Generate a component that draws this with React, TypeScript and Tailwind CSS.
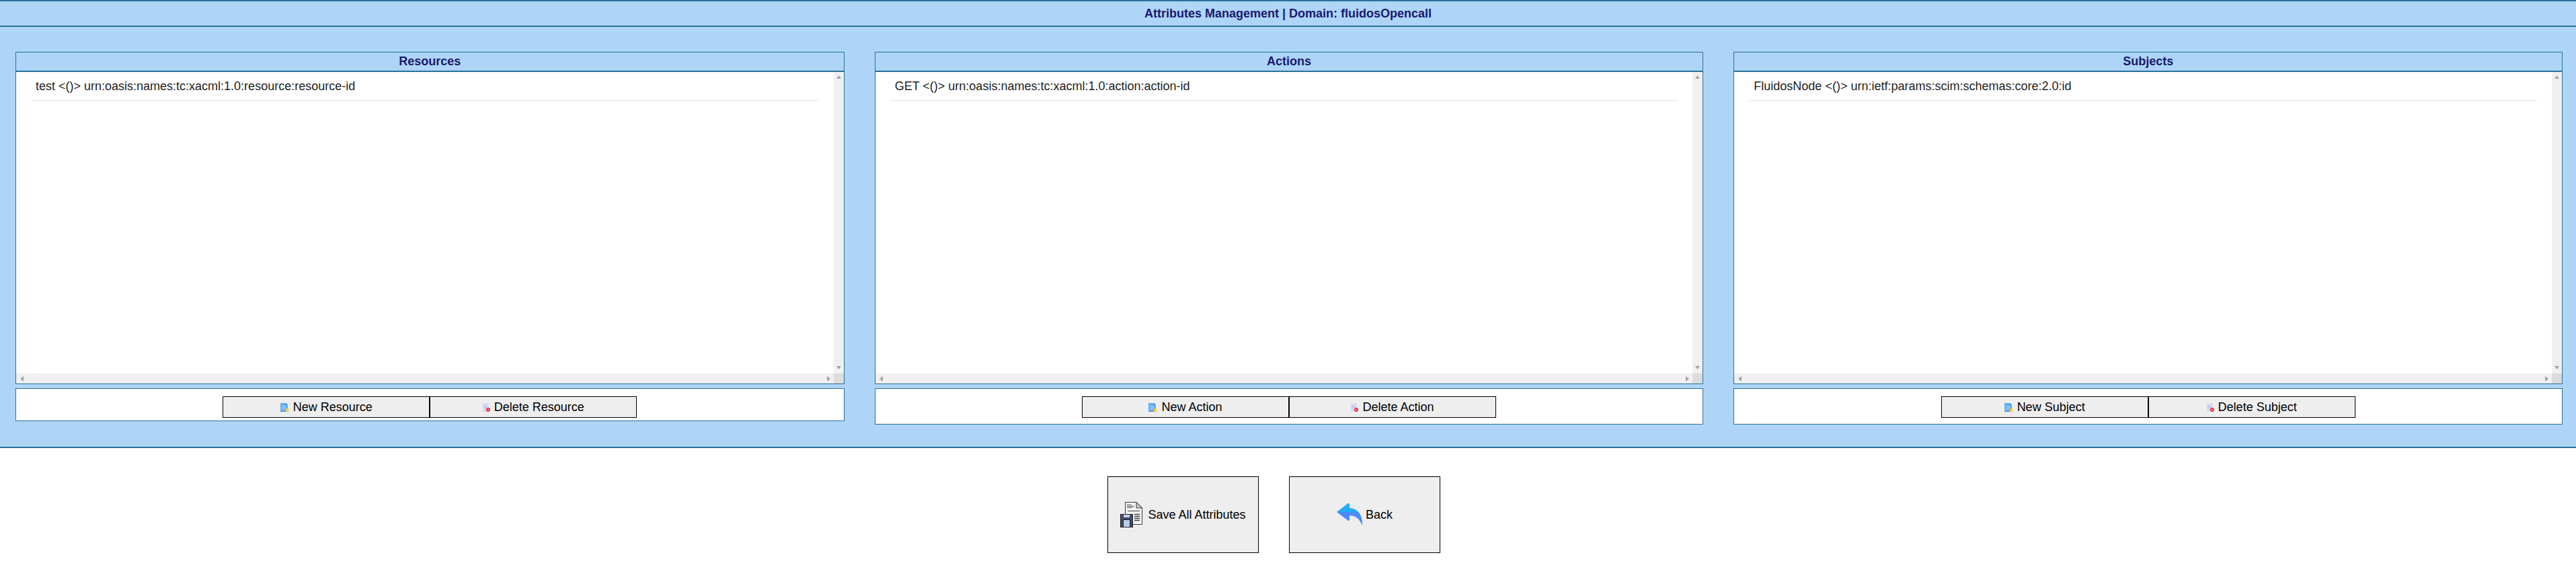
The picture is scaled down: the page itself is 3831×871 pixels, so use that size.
const panels = [
  {
    title: 'Resources',
    row: 'test <()> urn:oasis:names:tc:xacml:1.0:resource:resource-id',
    add: 'New Resource',
    remove: 'Delete Resource',
    footer: 'h-[49px]',
  },
  {
    title: 'Actions',
    row: 'GET <()> urn:oasis:names:tc:xacml:1.0:action:action-id',
    add: 'New Action',
    remove: 'Delete Action',
    footer: 'h-[54px]',
  },
  {
    title: 'Subjects',
    row: 'FluidosNode <()> urn:ietf:params:scim:schemas:core:2.0:id',
    add: 'New Subject',
    remove: 'Delete Subject',
    footer: 'h-[54px]',
  },
]

function NewIcon() {
  return (
    <svg width="13" height="13" viewBox="0 0 13 13" className="shrink-0">
      <path d="M0 0H8L11 3V13H0Z" fill="#64b0f2" />
      <path d="M8 0L11 3H8Z" fill="#2f7fd0" />
      <path d="M2 5H8M2 7H8M2 9H7" stroke="#a5d2f8" strokeWidth="1" />
      <path d="M0 12H10V13H0Z" fill="#3f8fe0" />
      <circle cx="10" cy="10.5" r="2.5" fill="#fbc934" />
    </svg>
  )
}

function DeleteIcon() {
  return (
    <svg width="11" height="13" viewBox="0 0 11 13" className="shrink-0">
      <path d="M0 1H6L9 4V13H0Z" fill="#d5daf2" />
      <path d="M2 5H5M2 7H7" stroke="#b3bbe2" strokeWidth="1" />
      <circle cx="7.5" cy="1" r="1" fill="#c4cbe8" />
      <circle cx="8" cy="10" r="3" fill="#ee3344" />
      <circle cx="8" cy="10" r="1" fill="#f7a0a8" />
    </svg>
  )
}

function SaveIcon() {
  return (
    <svg width="33" height="38" viewBox="0 0 33 38" className="shrink-0">
      <path d="M7.5 .5H24L32.5 9V33.5H7.5Z" fill="#f2f2f2" stroke="#3a3a3a" />
      <path d="M24 .5V9H32.5Z" fill="#c9c9c9" stroke="#3a3a3a" />
      <path d="M10 4.5H17M10 6.5H21M10 8.5H18" stroke="#555" />
      <path d="M11 13.5H29" stroke="#444" />
      <path d="M21 18.5H29M21 21.5H29M21 24.5H29M21 27.5H29" stroke="#444" strokeWidth="1.4" />
      <rect x=".5" y="18.5" width="18" height="19" fill="#3d4e6e" stroke="#222" />
      <rect x="5" y="19" width="9" height="4" fill="#c7d3e8" />
      <rect x="4.5" y="26.5" width="10" height="11" fill="#bccdeb" stroke="#222" />
    </svg>
  )
}

function BackIcon() {
  return (
    <svg width="38" height="34" viewBox="0 0 38 34" className="shrink-0">
      <defs>
        <linearGradient id="backFill" x1="0" y1="0" x2="0" y2="1">
          <stop offset="0.38" stopColor="#22abff" />
          <stop offset="0.38" stopColor="#4a8dff" />
        </linearGradient>
      </defs>
      <path
        d="M0 13L17 0Q19 -.5 19 2V7C32 8 39 18 38 33.5C34 23 28 18.5 19 18V24Q19 27 16.5 25.5Z"
        fill="url(#backFill)"
      />
    </svg>
  )
}

function Arrow({ dir }: { dir: 'up' | 'down' | 'left' | 'right' }) {
  const points = {
    up: '3.5,0 7,5 0,5',
    down: '0,0 7,0 3.5,5',
    left: '5,0 5,8 0,4',
    right: '0,0 5,4 0,8',
  }[dir]
  const vertical = dir === 'up' || dir === 'down'
  return (
    <svg width={vertical ? 7 : 5} height={vertical ? 5 : 8} className="shrink-0">
      <polygon points={points} fill="#a3a3a3" />
    </svg>
  )
}

function Panel({ panel }: { panel: (typeof panels)[number] }) {
  return (
    <div className="min-w-0">
      <div className="border border-[#2a7099]">
        <div className="flex h-[29px] items-center justify-center border-b-2 border-[#2a7099] text-[18px] font-bold text-[#191970]">
          {panel.title}
        </div>
        <div className="flex h-[448px] bg-white">
          <div className="min-w-0 flex-1 pl-[22px] pr-[22px]">
            <div className="flex h-[43px] items-center border-b border-[#e0e0e0] pl-[7px] text-[18px] text-[#222]">
              {panel.row}
            </div>
          </div>
          <div className="flex w-[15px] flex-col items-center justify-between bg-[#f0f0f0] pt-[5px] pb-[6px]">
            <Arrow dir="up" />
            <Arrow dir="down" />
          </div>
        </div>
        <div className="flex h-[15px] items-center justify-between bg-[#f0f0f0] pl-[6px]">
          <Arrow dir="left" />
          <div className="flex items-center">
            <Arrow dir="right" />
            <div className="ml-[5px] h-[15px] w-[15px] bg-[#dcdcdc]" />
          </div>
        </div>
      </div>
      <div className={`mt-[6px] flex justify-center border border-[#2a7099] bg-white pt-[11px] ${panel.footer}`}>
        <div className="flex h-[32px] w-[616px]">
          <button className="flex flex-1 items-center justify-center gap-[6px] border border-black bg-[#eee] text-[18px] text-black">
            <NewIcon />
            {panel.add}
          </button>
          <button className="flex flex-1 items-center justify-center gap-[6px] border border-black bg-[#eee] text-[18px] text-black">
            <DeleteIcon />
            {panel.remove}
          </button>
        </div>
      </div>
    </div>
  )
}

export default function App() {
  return (
    <div className="h-[871px] overflow-hidden bg-white font-['Liberation_Sans',Arial,sans-serif]">
      <div className="border-b-2 border-[#2a7099] bg-[#aed5f7]">
        <div className="flex h-[40px] items-center justify-center border-y-2 border-[#2a7099] text-[18px] font-bold text-[#191970]">
          Attributes Management | Domain: fluidosOpencall
        </div>
        <div className="grid h-[624px] grid-cols-3 items-start gap-x-[45px] pt-[37px] pl-[23px] pr-[20px]">
          {panels.map((panel) => (
            <Panel key={panel.title} panel={panel} />
          ))}
        </div>
      </div>
      <div className="flex gap-[45px] pt-[42px] pl-[1647px]">
        <button className="flex h-[114px] w-[225px] items-center justify-center gap-[8px] border border-black bg-[#eee] text-[18px] text-black">
          <SaveIcon />
          Save All Attributes
        </button>
        <button className="flex h-[114px] w-[225px] items-center justify-center gap-[5px] border border-black bg-[#eee] text-[18px] text-black">
          <BackIcon />
          Back
        </button>
      </div>
    </div>
  )
}
